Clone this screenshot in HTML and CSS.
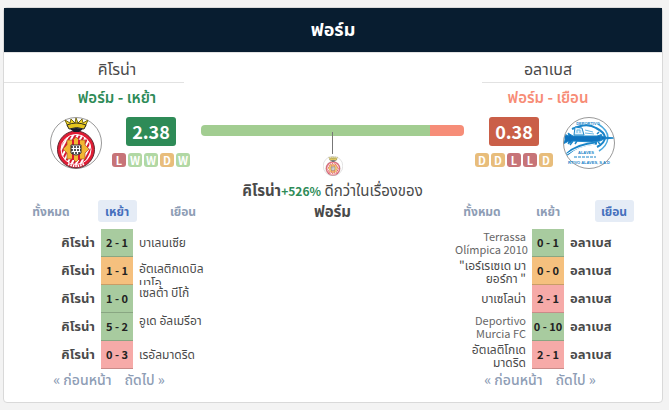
FILE: index.html
```html
<!DOCTYPE html>
<html lang="th">
<head>
<meta charset="utf-8">
<meta name="viewport" content="width=device-width, initial-scale=1">
<title>ฟอร์ม</title>
<link rel="stylesheet" href="styles.css">
</head>
<body>
<svg class="defs" aria-hidden="true">
  <defs>
    <pattern id="stripes" width="4" height="4" patternUnits="userSpaceOnUse" patternTransform="rotate(28)">
      <rect width="4" height="4" fill="#d8192f"/><rect width="2" height="4" fill="#fff"/>
    </pattern>
    <clipPath id="round"><circle cx="26" cy="26" r="25"/></clipPath>
    <symbol id="girona" viewBox="0 0 52 52">
      <circle cx="26" cy="26" r="25.5" fill="#fff" stroke="#999"/>
      <circle cx="26" cy="32.500" r="18.500" fill="#e01c34" stroke="#5d2730"/>
      <circle cx="26" cy="32.500" r="15" fill="url(#stripes)" stroke="#fff"/>
      <path d="M26 20l3 3h6v5l4 4-4 4v6h-6l-3 3-3-3h-6v-6l-4-4 4-4v-5h6z" fill="#f2b632" stroke="#a9552c" stroke-width=".7"/>
      <path d="M23 23v20M29 23v20" stroke="#d8192f" stroke-width="2"/>
      <path d="M21 28h10v8q-5 4-10 0z" fill="#fff" stroke="#333"/>
      <path d="M21 30h10M21 33h10M22 36h8" fill="none" stroke="#222" stroke-width="1.500" stroke-dasharray="2 1"/>
      <path d="M18 10l-3-7 5 3 1-4 4 4 1-5 2 5 4-4 1 4 5-3-3 7z" fill="#f2d527" stroke="#746712"/>
      <path d="M17 8q9-4 19 0l-2 4q-7-3-15 0z" fill="#e5c51e" stroke="#302e20"/>
      <path d="M20 12q6-2 13 0l-4 3h-5z" fill="#151a29"/>
      <path d="M18 47q8 4 16 0" fill="none" stroke="#fff" stroke-width="2" stroke-dasharray="1.500 1"/>
    </symbol>
    <symbol id="alaves" viewBox="0 0 52 52">
      <circle cx="26" cy="26" r="25.500" fill="#fff" stroke="#999"/>
      <g clip-path="url(#round)" fill="none" stroke="#1b86c9">
        <path d="M9 12Q24 5 33 11Q41 15 42 20Q42 26 34 30" stroke-width="2"/>
        <path d="M35 7Q45 13 45 21Q44 29 36 34" stroke="#4aa9de" stroke-width="1.500"/>
        <path d="M3 38Q14 27 34 26" stroke-width="3"/>
        <path d="M4 37Q15 29 32 27" stroke="#fff"/>
        <path d="M1 17l5 2-1-3 5 3h24l3-1 4 2 10 1-10 1-4 2-8 1-19-1-5 3 1-3-6 3 2-4z" fill="#0f72bd" stroke="#1b86c9"/>
        <path d="M10 24l-3 4M14 24l-2 3M34 17l2-2M35 25l2 2M38 17v6" stroke-width="1.500"/>
        <path d="M11 18l1-8 7 1 2 7z" fill="#e3f3fc"/>
        <path d="M14 16v-3h3v3M22 13l8 2M22 16l9 1" stroke="#69b6e3"/>
        <path d="M11 40h22" stroke-dasharray="3 1"/>
      </g>
      <g class="crest-text">
        <text x="25" y="8">DEPORTIVO</text>
        <text x="23" y="37">ALAVES</text>
        <text x="26" y="47">RTIVO ALAVES, S.A.D</text>
      </g>
    </symbol>
  </defs>
</svg>
<main class="card">
  <h1 class="card-title">ฟอร์ม</h1>
  <div class="compare">
    <section class="side home">
      <h2 class="team">คิโรน่า</h2>
      <h3 class="venue good">ฟอร์ม - เหย้า</h3>
      <div class="summary">
        <svg class="crest" role="img" aria-label="คิโรน่า"><use href="#girona"/></svg>
        <div class="rating">
          <strong class="ppg ppg-good">2.38</strong>
          <div class="chips"><span class="chip l">L</span><span class="chip w">W</span><span class="chip w">W</span><span class="chip d">D</span><span class="chip w">W</span></div>
        </div>
      </div>
      <div class="tabs"><button>ทั้งหมด</button><button class="active">เหย้า</button><button>เยือน</button></div>
      <table class="results">
        <tr><td class="own">คิโรน่า</td><td class="score win">2 - 1</td><td><div class="name single">บาเลนเซีย</div></td></tr>
        <tr><td class="own">คิโรน่า</td><td class="score draw">1 - 1</td><td><div class="name clipped">อัตเลติกเดบิล<br>บาโอ</div></td></tr>
        <tr><td class="own">คิโรน่า</td><td class="score win">1 - 0</td><td><div class="name raised">เซลต้า บีโก้</div></td></tr>
        <tr><td class="own">คิโรน่า</td><td class="score win">5 - 2</td><td><div class="name raised">อูเด อัลเมรีอา</div></td></tr>
        <tr><td class="own">คิโรน่า</td><td class="score loss">0 - 3</td><td><div class="name single">เรอัลมาดริด</div></td></tr>
      </table>
      <nav class="pager"><a href="#">« ก่อนหน้า</a><a href="#">ถัดไป »</a></nav>
    </section>
    <section class="middle">
      <div class="bar"><span class="bar-home"></span><span class="bar-away"></span></div>
      <div class="pointer"></div>
      <svg class="mini-crest" aria-hidden="true"><use href="#girona"/></svg>
      <p class="verdict"><b>คิโรน่า</b><b class="edge good">+526%</b> ดีกว่าในเรื่องของ<br><b>ฟอร์ม</b></p>
    </section>
    <section class="side away">
      <h2 class="team">อลาเบส</h2>
      <h3 class="venue bad">ฟอร์ม - เยือน</h3>
      <div class="summary">
        <div class="rating">
          <strong class="ppg ppg-bad">0.38</strong>
          <div class="chips"><span class="chip d">D</span><span class="chip d">D</span><span class="chip l">L</span><span class="chip l">L</span><span class="chip d">D</span></div>
        </div>
        <svg class="crest" role="img" aria-label="อลาเบส"><use href="#alaves"/></svg>
      </div>
      <div class="tabs"><button>ทั้งหมด</button><button>เหย้า</button><button class="active">เยือน</button></div>
      <table class="results">
        <tr><td><div class="name latin">Terrassa<br>Olímpica 2010</div></td><td class="score win">0 - 1</td><td class="own">อลาเบส</td></tr>
        <tr><td><div class="name">"เอร์เรเซเด มา<br>ยอร์กา "</div></td><td class="score draw">0 - 0</td><td class="own">อลาเบส</td></tr>
        <tr><td><div class="name single">บาเซโลน่า</div></td><td class="score loss">2 - 1</td><td class="own">อลาเบส</td></tr>
        <tr><td><div class="name latin">Deportivo<br>Murcia FC</div></td><td class="score win">0 - 10</td><td class="own">อลาเบส</td></tr>
        <tr><td><div class="name">อัตเลติโกเด<br>มาดริด</div></td><td class="score loss">2 - 1</td><td class="own">อลาเบส</td></tr>
      </table>
      <nav class="pager"><a href="#">« ก่อนหน้า</a><a href="#">ถัดไป »</a></nav>
    </section>
  </div>
</main>
</body>
</html>
```
FILE: styles.css
```css
* { box-sizing: border-box; }
body {
  margin: 0;
  padding: 7px 6px 7px 3px;
  background: #f3f3f3;
  color: #4a4a4a;
  font-family: "Noto Sans CJK JP", "Noto Sans Thai", "Noto Sans", sans-serif;
  font-size: 13px;
}
.defs { position: absolute; width: 0; height: 0; }
.card {
  background: #fff;
  border: 1px solid #d9d9d9;
  border-radius: 4px;
  padding-bottom: 13px;
}
.card-title {
  margin: 0;
  background: #081d30;
  color: #fff;
  font-size: 18px;
  line-height: 40px;
  padding-bottom: 4px;
  text-align: center;
  border-bottom: 1px solid #e3e3e3;
}
.compare { display: grid; grid-template-columns: 226px 1fr 228px; }
.side { display: flex; flex-direction: column; align-items: center; }
.team, .venue { margin: 0; text-align: center; width: 100%; }
.team {
  font-size: 16px;
  line-height: 30px;
  font-weight: 400;
  background: linear-gradient(#e2e2e2, #e2e2e2) left bottom / 180px 1px no-repeat;
}
.away .team { background-position: right bottom; }
.venue { font-size: 15px; line-height: 28px; margin-bottom: 6px; font-weight: 600; }
.good { color: #2e8b57; }
.bad { color: #f78c76; }
.summary { display: flex; gap: 10px; height: 52px; }
.home .summary { margin-left: 6px; }
.away .summary { margin-right: 6px; }
.crest { width: 52px; height: 52px; }
.crest-text { fill: #1b86c9; stroke: none; font-family: "Liberation Sans", sans-serif; font-size: 4px; font-weight: 700; text-anchor: middle; }
.rating { display: flex; flex-direction: column; align-items: center; gap: 7px; }
.ppg {
  width: 50px;
  border-radius: 3px;
  color: #fff;
  font-size: 18px;
  line-height: 29px;
  text-align: center;
}
.ppg-good { background: #2e8b57; }
.ppg-bad { background: #ca5f48; }
.chips { display: flex; gap: 2px; }
.chip {
  width: 14px;
  border-radius: 3px;
  color: #fff;
  font-size: 11px;
  font-weight: 700;
  line-height: 14px;
  text-align: center;
}
.w { background: #b1d8a4; }
.d { background: #e8bd7b; }
.l { background: #c77478; }
.tabs { display: grid; grid-template-columns: repeat(3, 66px); justify-items: center; margin-top: 31px; }
.tabs button {
  width: 39px;
  padding: 0;
  border: 0;
  border-radius: 3px;
  background: none;
  color: #8e9db5;
  font: 700 12px/22px "Noto Sans CJK JP", "Noto Sans Thai", "Noto Sans", sans-serif;
  white-space: nowrap;
  display: flex;
  justify-content: center;
}
.tabs .active { background: #e5ecf6; color: #4570bd; }
.results { width: 198px; margin-top: 7px; border-collapse: collapse; table-layout: fixed; line-height: 13px; }
.results td { width: 83px; height: 28px; padding: 0 6px; white-space: nowrap; }
.results td:first-child { text-align: right; }
.results .own { font-weight: 700; font-size: 13px; padding-bottom: 4px; }
.results .score { width: 32px; padding: 0 0 2px; text-align: center; color: #222; font-weight: 700; font-size: 11px; box-shadow: inset 0 -1px rgba(0, 0, 0, .18); }
.win { background: #a8cb9f; }
.draw { background: #f5c07e; }
.loss { background: #f6aaa8; }
.name { font-size: 12px; }
.latin { font-size: 11px; color: #666; }
.single { padding-bottom: 4px; }
.clipped { height: 28px; padding-top: 4px; line-height: 14px; overflow: hidden; }
.raised { height: 28px; }
.pager { display: flex; gap: 13px; margin-right: 16px; line-height: 20px; }
.pager a { color: #8e9db5; font-size: 14px; font-weight: 500; text-decoration: none; }
.middle { display: flex; flex-direction: column; align-items: center; margin: 72px -30px 0 -29px; }
.bar { display: flex; width: 100%; height: 11px; border-radius: 4px; overflow: hidden; }
.bar-home { flex: 87; background: #a2cd91; }
.bar-away { flex: 13; background: #f68d78; }
.pointer { width: 1px; height: 22px; margin-top: -4px; background: #777; }
.mini-crest { width: 20px; height: 20px; margin-top: 2px; opacity: .7; }
.verdict { margin: 4px 0 0; font-size: 15px; line-height: 20px; text-align: center; white-space: nowrap; }
.edge { font-size: 12px; }
```
